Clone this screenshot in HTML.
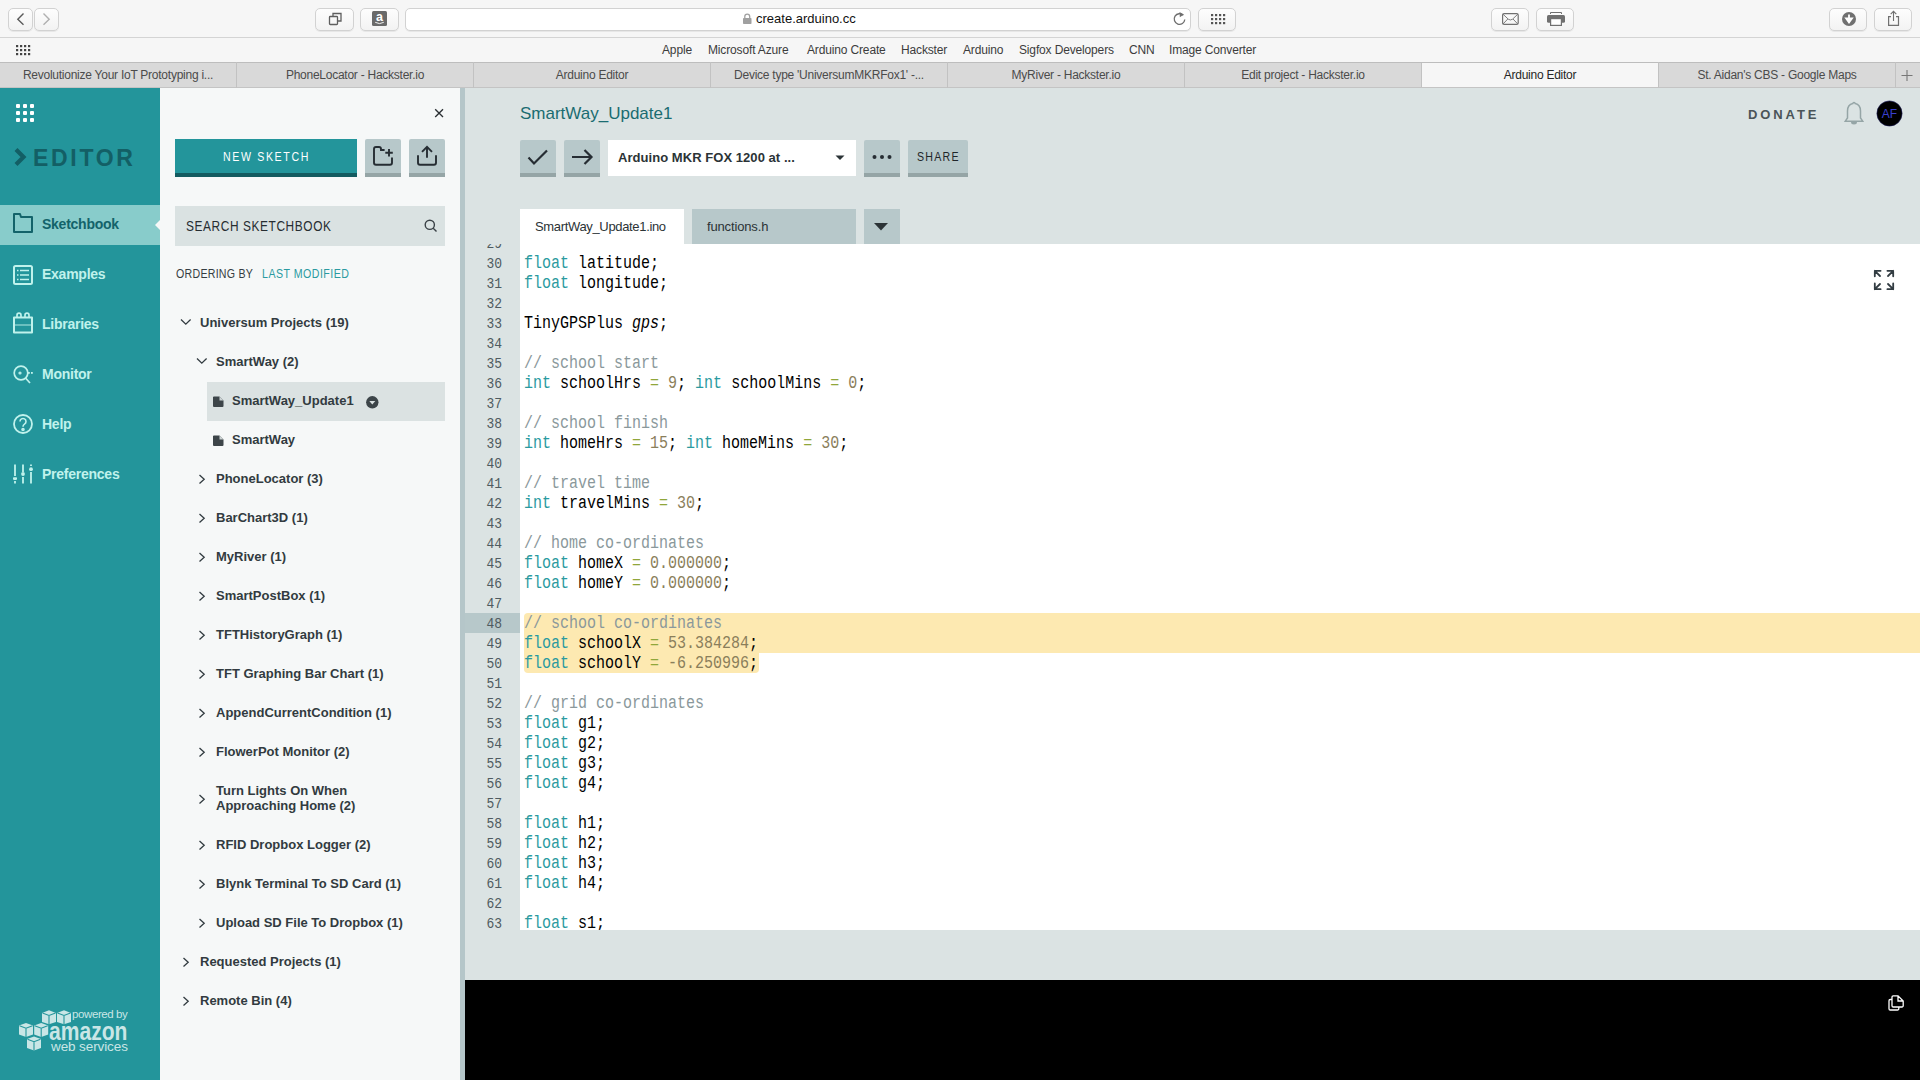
<!DOCTYPE html>
<html><head><meta charset="utf-8">
<style>
*{margin:0;padding:0;box-sizing:border-box}
html,body{width:1920px;height:1080px;overflow:hidden;background:#f6f6f6;font-family:"Liberation Sans",sans-serif}
.a{position:absolute}
.sbtn{position:absolute;top:8px;height:23px;border:1px solid #d2d2d2;border-radius:5px;background:linear-gradient(#fdfdfd,#f3f3f3);box-shadow:0 1px 0 rgba(0,0,0,0.06)}
.bm{position:absolute;top:43px;font-size:12px;letter-spacing:-0.15px;color:#3c3c3c;white-space:nowrap}
.tab{position:absolute;top:62px;height:26px;border-left:1px solid #c2c2c2;font-size:12px;letter-spacing:-0.25px;color:#4b4b4b;text-align:center;line-height:27px;white-space:nowrap}
.nav{position:absolute;left:0;width:160px;height:40px}
.nav .t{position:absolute;left:42px;top:11px;font-size:14px;letter-spacing:-0.25px;font-weight:bold;color:#c0f2ec}
.tr{position:absolute;font-size:13px;font-weight:bold;color:#323b40;white-space:nowrap}
.chev{position:absolute;width:7px;height:7px;border-right:1.5px solid #3a4449;border-bottom:1.5px solid #3a4449}
.gbtn{position:absolute;top:140px;height:37px;background:#b7c8ca;border-bottom:4px solid #95a5a6;border-radius:2px 2px 0 0}
.code{position:absolute;left:524px;font-family:"Liberation Mono",monospace;font-size:15px;line-height:20px;white-space:pre;color:#000;transform:scaleY(1.2);transform-origin:0 13px}
.ln{position:absolute;left:465px;width:37px;text-align:right;font-family:"Liberation Mono",monospace;font-size:13px;line-height:20px;color:#4f5b60;transform:scaleY(1.14);transform-origin:0 12.4px}
.k{color:#2a9aa0}.c{color:#8a989b}.n{color:#8a7e5b}.o{color:#90a63a}
</style></head><body>
<!-- Safari toolbar -->
<div class="a" style="left:0;top:0;width:1920px;height:38px;background:#f6f6f6;border-bottom:1px solid #d4d4d4"></div>
<div class="sbtn" style="left:8px;width:25px"></div>
<div class="sbtn" style="left:34px;width:25px"></div>
<div class="sbtn" style="left:315px;width:39px"></div>
<div class="sbtn" style="left:360px;width:39px"></div>
<div class="sbtn" style="left:405px;width:786px;background:#fff"></div>
<div class="sbtn" style="left:1198px;width:38px"></div>
<div class="sbtn" style="left:1491px;width:38px"></div>
<div class="sbtn" style="left:1536px;width:38px"></div>
<div class="sbtn" style="left:1829px;width:38px"></div>
<div class="sbtn" style="left:1874px;width:38px"></div>
<div class="a" style="left:756px;top:11px;font-size:13px;color:#111">create.arduino.cc</div>
<!-- bookmarks -->
<div class="a" style="left:0;top:38px;width:1920px;height:24px;background:#f6f6f6"></div>
<div class="bm" style="left:662px">Apple</div>
<div class="bm" style="left:708px">Microsoft Azure</div>
<div class="bm" style="left:807px">Arduino Create</div>
<div class="bm" style="left:901px">Hackster</div>
<div class="bm" style="left:963px">Arduino</div>
<div class="bm" style="left:1019px">Sigfox Developers</div>
<div class="bm" style="left:1129px">CNN</div>
<div class="bm" style="left:1169px">Image Converter</div>
<!-- tabs -->
<div class="a" style="left:0;top:62px;width:1920px;height:26px;background:#d9d9d9;border-top:1px solid #bdbdbd;border-bottom:1px solid #c4c4c4"></div>
<div class="tab" style="left:0;width:236px;border-left:none">Revolutionize Your IoT Prototyping i...</div>
<div class="tab" style="left:236px;width:237px">PhoneLocator - Hackster.io</div>
<div class="tab" style="left:473px;width:237px">Arduino Editor</div>
<div class="tab" style="left:710px;width:237px">Device type 'UniversumMKRFox1' -...</div>
<div class="tab" style="left:947px;width:237px">MyRiver - Hackster.io</div>
<div class="tab" style="left:1184px;width:237px">Edit project - Hackster.io</div>
<div class="tab" style="left:1421px;width:237px;background:#f6f6f6;color:#262626;top:63px;height:24px;line-height:25px">Arduino Editor</div>
<div class="tab" style="left:1658px;width:237px">St. Aidan's CBS - Google Maps</div>
<div class="tab" style="left:1895px;width:25px"></div>


<svg class="a" style="left:0;top:0" width="1920" height="88" fill="none">
 <path d="M23.5 13.5 L17.8 19.2 L23.5 24.8" stroke="#5a5a5a" stroke-width="1.4"/>
 <path d="M43.5 13.5 L49.2 19.2 L43.5 24.8" stroke="#b0b0b0" stroke-width="1.4"/>
 <rect x="329.5" y="16.5" width="8" height="8" rx="0.8" stroke="#5f5f5f" stroke-width="1.3"/>
 <path d="M333 16.3 V13.5 H341 V21 H338" stroke="#5f5f5f" stroke-width="1.3"/>
 <rect x="372" y="11" width="15" height="15" rx="1.5" fill="#6a6a6a"/>
 <text x="379.5" y="21" text-anchor="middle" font-family="Liberation Sans" font-weight="bold" font-size="12.5" fill="#fff">a</text>
 <path d="M375.2 22.3 q4.3 2.6 8.6 0" stroke="#fff" stroke-width="0.9"/>
 <rect x="743" y="18" width="8.5" height="6" rx="0.8" fill="#a0a0a0"/>
 <path d="M744.8 18.2 v-1.6 a2.45 2.45 0 0 1 4.9 0 v1.6" stroke="#a0a0a0" stroke-width="1.3"/>
 <path d="M1183.3 15.3 A5.3 5.3 0 1 0 1184.8 19.5" stroke="#6e6e6e" stroke-width="1.3"/>
 <path d="M1179.5 12 L1183.8 14.5 L1179.8 17.2z" fill="#6e6e6e"/>
 <g fill="#555">
  <rect x="1211" y="14" width="2.2" height="2.2"/><rect x="1215" y="14" width="2.2" height="2.2"/><rect x="1219" y="14" width="2.2" height="2.2"/><rect x="1223" y="14" width="2.2" height="2.2"/>
  <rect x="1211" y="18" width="2.2" height="2.2"/><rect x="1215" y="18" width="2.2" height="2.2"/><rect x="1219" y="18" width="2.2" height="2.2"/><rect x="1223" y="18" width="2.2" height="2.2"/>
  <rect x="1211" y="22" width="2.2" height="2.2"/><rect x="1215" y="22" width="2.2" height="2.2"/><rect x="1219" y="22" width="2.2" height="2.2"/><rect x="1223" y="22" width="2.2" height="2.2"/>
 </g>
 <g fill="#444">
  <rect x="16" y="45" width="2.2" height="2.2"/><rect x="20" y="45" width="2.2" height="2.2"/><rect x="24" y="45" width="2.2" height="2.2"/><rect x="28" y="45" width="2.2" height="2.2"/>
  <rect x="16" y="49" width="2.2" height="2.2"/><rect x="20" y="49" width="2.2" height="2.2"/><rect x="24" y="49" width="2.2" height="2.2"/><rect x="28" y="49" width="2.2" height="2.2"/>
  <rect x="16" y="53" width="2.2" height="2.2"/><rect x="20" y="53" width="2.2" height="2.2"/><rect x="24" y="53" width="2.2" height="2.2"/><rect x="28" y="53" width="2.2" height="2.2"/>
 </g>
 <rect x="1502.6" y="13.6" width="15.6" height="10.8" rx="1.5" stroke="#707070" stroke-width="1.2"/>
 <path d="M1503 14.2 L1508.3 19.2 Q1510.4 20.8 1512.5 19.2 L1517.8 14.2 M1503 24 L1507.8 19 M1517.8 24 L1513 19" stroke="#707070" stroke-width="0.9"/>
 <path d="M1550.5 14 V12.5 H1561.5 V14" stroke="#707070" stroke-width="1"/>
 <rect x="1547" y="15" width="18" height="7.8" rx="1.5" fill="#707070"/>
 <rect x="1550.6" y="18.6" width="10.8" height="6.8" fill="#fff" stroke="#707070" stroke-width="1.2"/>
 <circle cx="1849" cy="19" r="7" fill="#707070"/>
 <path d="M1849 14.5 V21 M1846 18.3 L1849 22.5 L1852 18.3z" stroke="#fff" stroke-width="1.8" fill="#fff"/>
 <path d="M1891 16.6 H1888.6 V25.3 H1898.5 V16.6 H1896" stroke="#707070" stroke-width="1.2"/>
 <path d="M1893.5 21 V11.5 M1890.7 14.2 L1893.5 11.3 L1896.3 14.2" stroke="#707070" stroke-width="1.1"/>
 <path d="M1907 70 v11 M1901.5 75.5 h11" stroke="#777" stroke-width="1.1"/>
</svg>
<!-- content -->
<div class="a" style="left:0;top:88px;width:160px;height:992px;background:#23959b"></div>
<div class="a" style="left:160px;top:88px;width:300px;height:992px;background:#f6f8f8"></div>
<div class="a" style="left:460px;top:88px;width:5px;height:992px;background:#b5c6c9"></div>
<div class="a" style="left:465px;top:88px;width:1455px;height:992px;background:#dbe3e3"></div>


<!-- sidebar -->
<svg class="a" style="left:0;top:88px" width="160" height="992">
 <g fill="#fff">
  <rect x="16" y="16" width="4" height="4" rx="1"/><rect x="23" y="16" width="4" height="4" rx="1"/><rect x="30" y="16" width="4" height="4" rx="1"/>
  <rect x="16" y="23" width="4" height="4" rx="1"/><rect x="23" y="23" width="4" height="4" rx="1"/><rect x="30" y="23" width="4" height="4" rx="1"/>
  <rect x="16" y="30" width="4" height="4" rx="1"/><rect x="23" y="30" width="4" height="4" rx="1"/><rect x="30" y="30" width="4" height="4" rx="1"/>
 </g>
 <path d="M16 61.5 L23.5 69 L16 76.5" fill="none" stroke="#135f65" stroke-width="4.2" stroke-linejoin="miter"/>
 <rect x="0" y="117" width="160" height="40" fill="#88cccb"/>
 <path d="M160 132 L155 137 L160 142Z" fill="#f6f8f8"/>
</svg>
<div class="a" style="left:33px;top:145px;font-size:23px;font-weight:bold;color:#135f65;letter-spacing:2.7px">EDITOR</div>
<svg class="a" style="left:0;top:200px" width="160" height="300" fill="none" stroke-width="2">
 <path d="M14 14 h6 l1 3 h11 v15 h-18 z" stroke="#13636a" stroke-linejoin="round"/>
 <g stroke="#c0f2ec">
 <rect x="14" y="66" width="18" height="18" rx="1.5"/>
 <path d="M17 70.5h1.5M20 70.5h9M17 75h1.5M20 75h9M17 79.5h1.5M20 79.5h9" stroke-width="1.6"/>
 <path d="M14 117.5 h18 v15 h-18 z" stroke-linejoin="round"/><path d="M15 125 h16" stroke-opacity="0.45"/>
 <path d="M17 117 v-1.8 a2 2 0 0 1 4 0 v1.8 M25 117 v-1.8 a2 2 0 0 1 4 0 v1.8" stroke-width="1.7"/>
 <circle cx="21" cy="173" r="6.8" stroke-width="1.7"/>
 <path d="M25.5 178 L30 183" stroke-width="1.7"/>
 <circle cx="20" cy="173" r="0.6" fill="#c0f2ec"/>
 <rect x="28" y="172" width="1.8" height="1.8" fill="#c0f2ec" stroke="none"/><rect x="31" y="172" width="1.8" height="1.8" fill="#c0f2ec" stroke="none"/>
 <circle cx="23" cy="224" r="9" stroke-width="1.8"/>
 <path d="M20 221.5 a3 3 0 1 1 4.5 2.6 c-1.2 0.7 -1.5 1.3 -1.5 2.6" stroke-width="1.6"/>
 <circle cx="23" cy="229.5" r="0.8" fill="#c0f2ec"/>
 <path d="M15 264.5v11.5M15 281v2.5M23 264.5v7.5M23 277v6.5M31 264.5v1.5M31 272v11.5" stroke-width="1.8"/>
 </g>
 <g fill="#c0f2ec"><rect x="13" y="277.3" width="4" height="2.6" rx="0.8"/><circle cx="23" cy="274" r="1.9"/><circle cx="31" cy="269.2" r="1.9"/></g>
</svg>
<div class="nav" style="top:205px"><div class="t" style="color:#13636a">Sketchbook</div></div>
<div class="nav" style="top:255px"><div class="t">Examples</div></div>
<div class="nav" style="top:305px"><div class="t">Libraries</div></div>
<div class="nav" style="top:355px"><div class="t">Monitor</div></div>
<div class="nav" style="top:405px"><div class="t">Help</div></div>
<div class="nav" style="top:455px"><div class="t">Preferences</div></div>

<!-- panel -->
<svg class="a" style="left:433px;top:107px" width="12" height="12"><path d="M2.2 2.2L10 10M10 2.2L2.2 10" stroke="#2b3034" stroke-width="1.35"/></svg>
<div class="a" style="left:175px;top:139px;width:182px;height:38px;background:#23959b;border-bottom:4px solid #135b60;"></div><div class="a" style="left:222.5px;top:148px;color:#fff;font-size:12.5px;letter-spacing:1.9px;line-height:18px;transform:scaleX(0.85);transform-origin:0 0;white-space:nowrap">NEW SKETCH</div>
<div class="gbtn" style="left:365px;top:139px;width:36px;height:38px;border-radius:2px 2px 0 0"></div>
<div class="gbtn" style="left:409px;top:139px;width:36px;height:38px;border-radius:2px 2px 0 0"></div>
<svg class="a" style="left:365px;top:139px" width="80" height="34" fill="none" stroke="#262d33" stroke-width="1.9">
 <path d="M27 18.4 V23.8 a2 2 0 0 1 -2 2 H11 a2 2 0 0 1 -2 -2 V10 a2 2 0 0 1 2 -2 H14 a2 2 0 0 1 2 2 V11 H19.6"/>
 <path d="M20.3 13.8 H27.8 M24 10 V17.6"/>
 <path d="M53 16.2 V23.8 a2 2 0 0 0 2 2 H69 a2 2 0 0 0 2 -2 V16.2"/>
 <path d="M62 18.7 V8.2 M57 12.8 L62 7.8 L67 12.8"/>
</svg>
<div class="a" style="left:175px;top:206px;width:270px;height:40px;background:#dae2e2"></div>
<div class="a" style="left:186px;top:218px;font-size:14px;letter-spacing:0.69px;color:#262d31;transform:scaleX(0.85);transform-origin:0 0;white-space:nowrap">SEARCH SKETCHBOOK</div>
<svg class="a" style="left:423px;top:218px" width="16" height="16" fill="none" stroke="#3a4146" stroke-width="1.4"><circle cx="6.8" cy="6.8" r="4.6"/><path d="M10.2 10.2 L13.5 13.5"/></svg>
<div class="a" style="left:176px;top:267px;font-size:12.5px;letter-spacing:0.3px;color:#353d42;transform:scaleX(0.85);transform-origin:0 0;white-space:nowrap">ORDERING BY</div>
<div class="a" style="left:262px;top:267px;font-size:12.5px;letter-spacing:0.56px;color:#2a9aa0;transform:scaleX(0.85);transform-origin:0 0;white-space:nowrap">LAST MODIFIED</div>
<div class="a" style="left:207px;top:382px;width:238px;height:39px;background:#dbe2e2"></div>
<div class="tr" style="left:200px;top:315px;line-height:16px">Universum Projects (19)</div>
<svg class="a" style="left:180px;top:318px" width="12" height="8"><path d="M1 1.5 L5.8 6.2 L10.6 1.5" fill="none" stroke="#323b40" stroke-width="1.3"/></svg>
<div class="tr" style="left:216px;top:354px;line-height:16px">SmartWay (2)</div>
<svg class="a" style="left:196px;top:357px" width="12" height="8"><path d="M1 1.5 L5.8 6.2 L10.6 1.5" fill="none" stroke="#323b40" stroke-width="1.3"/></svg>
<div class="tr" style="left:232px;top:393px;line-height:16px">SmartWay_Update1</div>
<svg class="a" style="left:213px;top:396px" width="11" height="11"><path d="M1 0.5 h5.5 l4 4 v5.5 a1 1 0 0 1 -1 1 h-8.5 a1 1 0 0 1 -1 -1 v-9 a1 1 0 0 1 1 -0.5z" fill="#3d4549"/><path d="M6.5 0.5 v4 h4" fill="#dbe2e2" opacity="0.9"/></svg>
<div class="tr" style="left:232px;top:432px;line-height:16px">SmartWay</div>
<svg class="a" style="left:213px;top:435px" width="11" height="11"><path d="M1 0.5 h5.5 l4 4 v5.5 a1 1 0 0 1 -1 1 h-8.5 a1 1 0 0 1 -1 -1 v-9 a1 1 0 0 1 1 -0.5z" fill="#3d4549"/><path d="M6.5 0.5 v4 h4" fill="#dbe2e2" opacity="0.9"/></svg>
<div class="tr" style="left:216px;top:471px;line-height:16px">PhoneLocator (3)</div>
<svg class="a" style="left:198px;top:474px" width="8" height="11"><path d="M1.5 1 L6.2 5.3 L1.5 9.6" fill="none" stroke="#323b40" stroke-width="1.3"/></svg>
<div class="tr" style="left:216px;top:510px;line-height:16px">BarChart3D (1)</div>
<svg class="a" style="left:198px;top:513px" width="8" height="11"><path d="M1.5 1 L6.2 5.3 L1.5 9.6" fill="none" stroke="#323b40" stroke-width="1.3"/></svg>
<div class="tr" style="left:216px;top:549px;line-height:16px">MyRiver (1)</div>
<svg class="a" style="left:198px;top:552px" width="8" height="11"><path d="M1.5 1 L6.2 5.3 L1.5 9.6" fill="none" stroke="#323b40" stroke-width="1.3"/></svg>
<div class="tr" style="left:216px;top:588px;line-height:16px">SmartPostBox (1)</div>
<svg class="a" style="left:198px;top:591px" width="8" height="11"><path d="M1.5 1 L6.2 5.3 L1.5 9.6" fill="none" stroke="#323b40" stroke-width="1.3"/></svg>
<div class="tr" style="left:216px;top:627px;line-height:16px">TFTHistoryGraph (1)</div>
<svg class="a" style="left:198px;top:630px" width="8" height="11"><path d="M1.5 1 L6.2 5.3 L1.5 9.6" fill="none" stroke="#323b40" stroke-width="1.3"/></svg>
<div class="tr" style="left:216px;top:666px;line-height:16px">TFT Graphing Bar Chart (1)</div>
<svg class="a" style="left:198px;top:669px" width="8" height="11"><path d="M1.5 1 L6.2 5.3 L1.5 9.6" fill="none" stroke="#323b40" stroke-width="1.3"/></svg>
<div class="tr" style="left:216px;top:705px;line-height:16px">AppendCurrentCondition (1)</div>
<svg class="a" style="left:198px;top:708px" width="8" height="11"><path d="M1.5 1 L6.2 5.3 L1.5 9.6" fill="none" stroke="#323b40" stroke-width="1.3"/></svg>
<div class="tr" style="left:216px;top:744px;line-height:16px">FlowerPot Monitor (2)</div>
<svg class="a" style="left:198px;top:747px" width="8" height="11"><path d="M1.5 1 L6.2 5.3 L1.5 9.6" fill="none" stroke="#323b40" stroke-width="1.3"/></svg>
<div class="tr" style="left:216px;top:783px;line-height:15px">Turn Lights On When<br>Approaching Home (2)</div>
<svg class="a" style="left:198px;top:794px" width="8" height="11"><path d="M1.5 1 L6.2 5.3 L1.5 9.6" fill="none" stroke="#323b40" stroke-width="1.3"/></svg>
<div class="tr" style="left:216px;top:837px;line-height:16px">RFID Dropbox Logger (2)</div>
<svg class="a" style="left:198px;top:840px" width="8" height="11"><path d="M1.5 1 L6.2 5.3 L1.5 9.6" fill="none" stroke="#323b40" stroke-width="1.3"/></svg>
<div class="tr" style="left:216px;top:876px;line-height:16px">Blynk Terminal To SD Card (1)</div>
<svg class="a" style="left:198px;top:879px" width="8" height="11"><path d="M1.5 1 L6.2 5.3 L1.5 9.6" fill="none" stroke="#323b40" stroke-width="1.3"/></svg>
<div class="tr" style="left:216px;top:915px;line-height:16px">Upload SD File To Dropbox (1)</div>
<svg class="a" style="left:198px;top:918px" width="8" height="11"><path d="M1.5 1 L6.2 5.3 L1.5 9.6" fill="none" stroke="#323b40" stroke-width="1.3"/></svg>
<div class="tr" style="left:200px;top:954px;line-height:16px">Requested Projects (1)</div>
<svg class="a" style="left:182px;top:957px" width="8" height="11"><path d="M1.5 1 L6.2 5.3 L1.5 9.6" fill="none" stroke="#323b40" stroke-width="1.3"/></svg>
<div class="tr" style="left:200px;top:993px;line-height:16px">Remote Bin (4)</div>
<svg class="a" style="left:182px;top:996px" width="8" height="11"><path d="M1.5 1 L6.2 5.3 L1.5 9.6" fill="none" stroke="#323b40" stroke-width="1.3"/></svg>
<svg class="a" style="left:366px;top:396px" width="13" height="13"><circle cx="6.3" cy="6.3" r="6.2" fill="#3d4549"/><path d="M3.3 5 h6 l-3 3.6z" fill="#dbe2e2"/></svg>
<svg class="a" style="left:0;top:1000px" width="160" height="60"><g transform="translate(42 10.3)"><path d="M0 2.6 L7 0 L14 2.6 V11.6 L7 14 L0 11.6Z" fill="#c9e6e6"/><path d="M0.5 2.8 L7 5.2 L13.5 2.8 M7 5.2 V14" stroke="#23959b" stroke-width="1.1" fill="none"/></g><g transform="translate(57 10.3)"><path d="M0 2.6 L7 0 L14 2.6 V11.6 L7 14 L0 11.6Z" fill="#c9e6e6"/><path d="M0.5 2.8 L7 5.2 L13.5 2.8 M7 5.2 V14" stroke="#23959b" stroke-width="1.1" fill="none"/></g><g transform="translate(19 23)"><path d="M0 2.6 L7 0 L14 2.6 V11.6 L7 14 L0 11.6Z" fill="#c9e6e6"/><path d="M0.5 2.8 L7 5.2 L13.5 2.8 M7 5.2 V14" stroke="#23959b" stroke-width="1.1" fill="none"/></g><g transform="translate(34.2 23)"><path d="M0 2.6 L7 0 L14 2.6 V11.6 L7 14 L0 11.6Z" fill="#c9e6e6"/><path d="M0.5 2.8 L7 5.2 L13.5 2.8 M7 5.2 V14" stroke="#23959b" stroke-width="1.1" fill="none"/></g><g transform="translate(27 36.5)"><path d="M0 2.6 L7 0 L14 2.6 V11.6 L7 14 L0 11.6Z" fill="#c9e6e6"/><path d="M0.5 2.8 L7 5.2 L13.5 2.8 M7 5.2 V14" stroke="#23959b" stroke-width="1.1" fill="none"/></g></svg>
<div class="a" style="left:72px;top:1008px;font-size:11.5px;line-height:13px;color:#c9e6e6;letter-spacing:-0.4px">powered by</div>
<div class="a" style="left:49px;top:1016px;font-size:26px;line-height:30px;font-weight:bold;color:#c9e6e6;transform:scaleX(0.81);transform-origin:0 0">amazon</div>
<div class="a" style="left:51px;top:1039px;font-size:13.5px;line-height:15px;color:#c9e6e6;letter-spacing:-0.1px">web services</div>

<!-- editor header -->
<div class="a" style="left:520px;top:104px;font-size:17px;color:#1a6c71;line-height:20px">SmartWay_Update1</div>
<div class="gbtn" style="left:520px;width:36px;height:37px"></div>
<div class="gbtn" style="left:564px;width:36px;height:37px"></div>
<div class="a" style="left:608px;top:140px;width:248px;height:36px;background:#fff"></div>
<div class="a" style="left:618px;top:149px;font-size:13px;font-weight:bold;color:#2b3336;line-height:18px;letter-spacing:0.05px">Arduino MKR FOX 1200 at ...</div>
<svg class="a" style="left:835px;top:155px" width="10" height="6"><path d="M0.5 0.5h9l-4.5 4.5z" fill="#2b3336"/></svg>
<div class="gbtn" style="left:864px;width:36px;height:37px"></div>
<div class="gbtn" style="left:908px;width:60px;height:37px;"></div><div class="a" style="left:916.6px;top:148px;font-size:12.5px;letter-spacing:1.44px;color:#1f2629;line-height:18px;transform:scaleX(0.85);transform-origin:0 0;white-space:nowrap">SHARE</div>
<svg class="a" style="left:520px;top:140px" width="460" height="36" fill="none" stroke="#262d33" stroke-width="2.2">
 <path d="M8.5 17.5 L14 23.5 L27 10.5"/>
 <path d="M52 17 h19.5 M64.5 10 l7 7 l-7 7"/>
 <g fill="#262d33" stroke="none"><circle cx="354.5" cy="17" r="2"/><circle cx="362" cy="17" r="2"/><circle cx="369.5" cy="17" r="2"/></g>
</svg>
<div class="a" style="left:1748px;top:107px;font-size:13px;font-weight:bold;letter-spacing:2.9px;color:#4a5458;line-height:16px">DONATE</div>
<svg class="a" style="left:1842px;top:100px" width="24" height="28"><path d="M12 2.5 a1.2 1.2 0 0 1 1.2 1 c3.5 0.7 5.3 3.6 5.3 7.5 v7 l2.2 3.2 h-17.4 l2.2 -3.2 v-7 c0 -3.9 1.8 -6.8 5.3 -7.5 a1.2 1.2 0 0 1 1.2 -1z" fill="none" stroke="#95a5a6" stroke-width="1.5"/><path d="M9 22 a3 2.5 0 0 0 6 0z" fill="#95a5a6"/></svg>
<svg class="a" style="left:1876px;top:100px" width="27" height="27"><circle cx="13.5" cy="13.5" r="12.6" fill="#000" stroke="#1c1c5a" stroke-width="0.6"/><text x="13.5" y="18" text-anchor="middle" font-family="Liberation Sans" font-size="12" fill="#3b40d0">AF</text></svg>
<!-- tabs -->
<div class="a" style="left:520px;top:209px;width:164px;height:35px;background:#fff"></div>
<div class="a" style="left:535px;top:218px;font-size:13px;letter-spacing:-0.34px;color:#2b3336;line-height:18px">SmartWay_Update1.ino</div>
<div class="a" style="left:692px;top:209px;width:164px;height:35px;background:#b7c8ca"></div>
<div class="a" style="left:707px;top:218px;font-size:13px;letter-spacing:-0.15px;color:#2b3336;line-height:18px">functions.h</div>
<div class="a" style="left:864px;top:209px;width:36px;height:35px;background:#b7c8ca"></div>
<svg class="a" style="left:873px;top:222px" width="16" height="10"><path d="M1 1h14l-7 7.5z" fill="#2b3336"/></svg>
<!-- code -->
<div class="a" style="left:520px;top:244px;width:1400px;height:686px;background:#fff"></div>
<div class="a" style="left:465px;top:613px;width:55px;height:20px;background:#b7c8ca"></div>
<div class="a" style="left:524px;top:613px;width:1396px;height:40px;background:#fde9b1;border-radius:4px 0 0 0"></div>
<div class="a" style="left:524px;top:653px;width:235px;height:20px;background:#fde9b1;border-radius:0 0 4px 4px"></div>
<svg class="a" style="left:1872px;top:268px" width="24" height="24" fill="none" stroke="#323c42" stroke-width="1.8" stroke-linecap="round" stroke-linejoin="round"><path d="M2.8 8.3V2.8H8.6M2.8 2.8L8 8M15.4 2.8H21.2V8.3M21.2 2.8L16 8M2.8 15.5V21.2H8.6M2.8 21.2L8 16M15.4 21.2H21.2V15.5M21.2 21.2L16 16"/></svg>
<div class="a" style="left:465px;top:244px;width:1455px;height:686px;overflow:hidden">
<div class="ln" style="left:0;top:-9px">29</div>
<div class="ln" style="left:0;top:11px">30</div><div class="code" style="left:59px;top:11px"><span class="k">float</span> latitude;</div>
<div class="ln" style="left:0;top:31px">31</div><div class="code" style="left:59px;top:31px"><span class="k">float</span> longitude;</div>
<div class="ln" style="left:0;top:51px">32</div>
<div class="ln" style="left:0;top:71px">33</div><div class="code" style="left:59px;top:71px">TinyGPSPlus <i>gps</i>;</div>
<div class="ln" style="left:0;top:91px">34</div>
<div class="ln" style="left:0;top:111px">35</div><div class="code" style="left:59px;top:111px"><span class="c">// school start</span></div>
<div class="ln" style="left:0;top:131px">36</div><div class="code" style="left:59px;top:131px"><span class="k">int</span> schoolHrs <span class="o">=</span> <span class="n">9</span>; <span class="k">int</span> schoolMins <span class="o">=</span> <span class="n">0</span>;</div>
<div class="ln" style="left:0;top:151px">37</div>
<div class="ln" style="left:0;top:171px">38</div><div class="code" style="left:59px;top:171px"><span class="c">// school finish</span></div>
<div class="ln" style="left:0;top:191px">39</div><div class="code" style="left:59px;top:191px"><span class="k">int</span> homeHrs <span class="o">=</span> <span class="n">15</span>; <span class="k">int</span> homeMins <span class="o">=</span> <span class="n">30</span>;</div>
<div class="ln" style="left:0;top:211px">40</div>
<div class="ln" style="left:0;top:231px">41</div><div class="code" style="left:59px;top:231px"><span class="c">// travel time</span></div>
<div class="ln" style="left:0;top:251px">42</div><div class="code" style="left:59px;top:251px"><span class="k">int</span> travelMins <span class="o">=</span> <span class="n">30</span>;</div>
<div class="ln" style="left:0;top:271px">43</div>
<div class="ln" style="left:0;top:291px">44</div><div class="code" style="left:59px;top:291px"><span class="c">// home co-ordinates</span></div>
<div class="ln" style="left:0;top:311px">45</div><div class="code" style="left:59px;top:311px"><span class="k">float</span> homeX <span class="o">=</span> <span class="n">0.000000</span>;</div>
<div class="ln" style="left:0;top:331px">46</div><div class="code" style="left:59px;top:331px"><span class="k">float</span> homeY <span class="o">=</span> <span class="n">0.000000</span>;</div>
<div class="ln" style="left:0;top:351px">47</div>
<div class="ln" style="left:0;top:371px">48</div><div class="code" style="left:59px;top:371px"><span class="c">// school co-ordinates</span></div>
<div class="ln" style="left:0;top:391px">49</div><div class="code" style="left:59px;top:391px"><span class="k">float</span> schoolX <span class="o">=</span> <span class="n">53.384284</span>;</div>
<div class="ln" style="left:0;top:411px">50</div><div class="code" style="left:59px;top:411px"><span class="k">float</span> schoolY <span class="o">=</span> <span class="n">-6.250996</span>;</div>
<div class="ln" style="left:0;top:431px">51</div>
<div class="ln" style="left:0;top:451px">52</div><div class="code" style="left:59px;top:451px"><span class="c">// grid co-ordinates</span></div>
<div class="ln" style="left:0;top:471px">53</div><div class="code" style="left:59px;top:471px"><span class="k">float</span> g1;</div>
<div class="ln" style="left:0;top:491px">54</div><div class="code" style="left:59px;top:491px"><span class="k">float</span> g2;</div>
<div class="ln" style="left:0;top:511px">55</div><div class="code" style="left:59px;top:511px"><span class="k">float</span> g3;</div>
<div class="ln" style="left:0;top:531px">56</div><div class="code" style="left:59px;top:531px"><span class="k">float</span> g4;</div>
<div class="ln" style="left:0;top:551px">57</div>
<div class="ln" style="left:0;top:571px">58</div><div class="code" style="left:59px;top:571px"><span class="k">float</span> h1;</div>
<div class="ln" style="left:0;top:591px">59</div><div class="code" style="left:59px;top:591px"><span class="k">float</span> h2;</div>
<div class="ln" style="left:0;top:611px">60</div><div class="code" style="left:59px;top:611px"><span class="k">float</span> h3;</div>
<div class="ln" style="left:0;top:631px">61</div><div class="code" style="left:59px;top:631px"><span class="k">float</span> h4;</div>
<div class="ln" style="left:0;top:651px">62</div>
<div class="ln" style="left:0;top:671px">63</div><div class="code" style="left:59px;top:671px"><span class="k">float</span> s1;</div>
</div>
<div class="a" style="left:465px;top:980px;width:1455px;height:100px;background:#000"></div>
<svg class="a" style="left:1886px;top:994px" width="20" height="20" fill="none" stroke="#fff" stroke-width="1.3"><path d="M7.2 1.8 H12 L17.2 7 V11.8 a1.2 1.2 0 0 1 -1.2 1.2 H7.2 a1.2 1.2 0 0 1 -1.2 -1.2 V3 a1.2 1.2 0 0 1 1.2 -1.2Z M12 1.8 V7 H17.2"/><path d="M6 5.5 H4.2 a1.2 1.2 0 0 0 -1.2 1.2 V14.8 a1.2 1.2 0 0 0 1.2 1.2 H11.6 a1.2 1.2 0 0 0 1.2 -1.2 V13"/></svg>
</body></html>
